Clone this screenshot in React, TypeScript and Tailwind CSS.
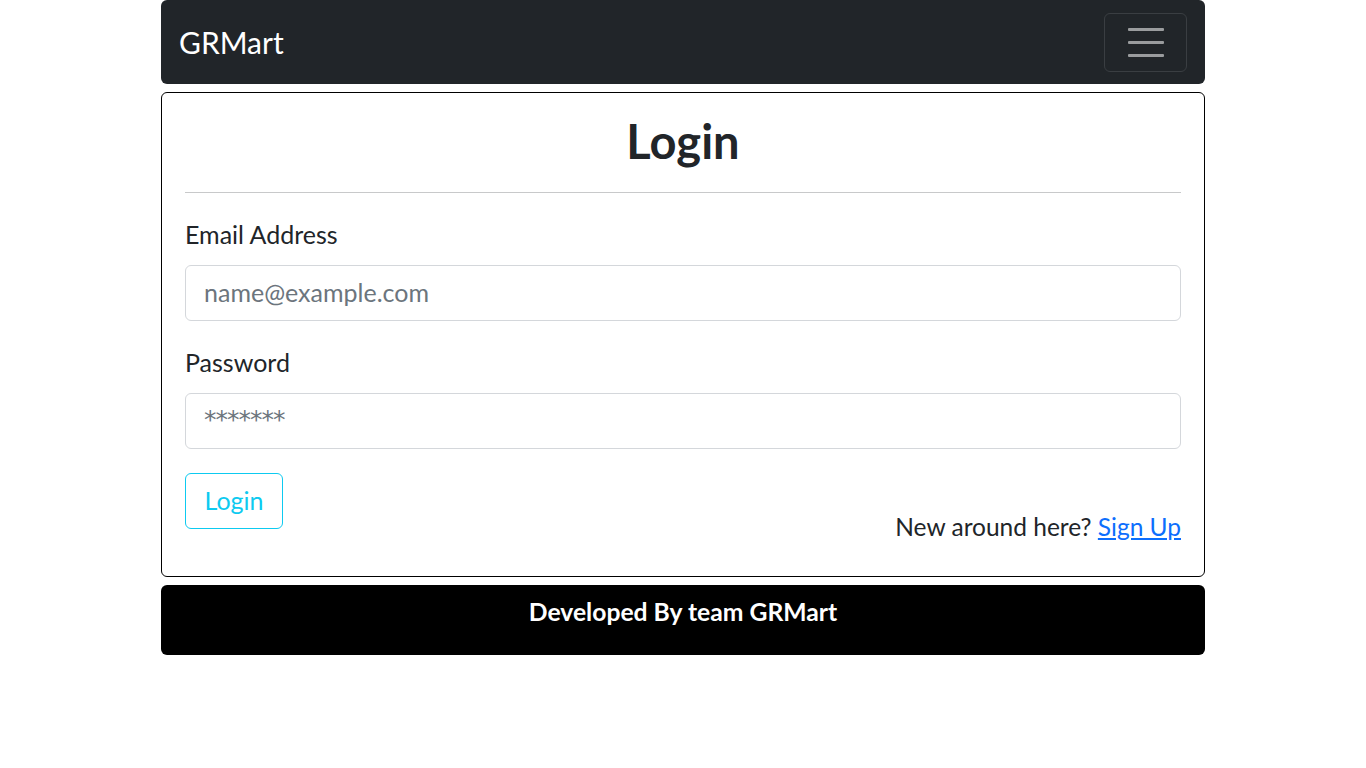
import React from "react";

export default function App() {
  return (
    <div
      className="w-full min-h-screen bg-white text-[#212529]"
      style={{ fontFamily: "Lato, 'Noto Sans', sans-serif" }}
    >
      <div className="mx-auto w-[1044px] flex flex-col">
        {/* Navbar */}
        <nav className="h-[84px] bg-[#212529] rounded-[6px] flex items-center justify-between pl-[18px] pr-[18px]">
          <span className="text-white text-[30px] leading-none">GRMart</span>
          <button className="w-[83px] h-[59px] border border-[#3a3e42] rounded-[6px] flex flex-col items-center justify-center gap-[10px]">
            <span className="block w-[36px] h-[3px] bg-[#9a9c9e] rounded-[1px]" />
            <span className="block w-[36px] h-[3px] bg-[#9a9c9e] rounded-[1px]" />
            <span className="block w-[36px] h-[3px] bg-[#9a9c9e] rounded-[1px]" />
          </button>
        </nav>

        {/* Card */}
        <div className="mt-[8px] border border-black rounded-[6px] px-[23px] pt-[24px] pb-[24px]">
          <h1 className="h-[48px] leading-[48px] text-center text-[47px] font-bold">Login</h1>
          <div className="mt-[27px] h-px bg-[#c8c9ca]" />

          <div className="mt-[26px] h-[30px] leading-[30px] text-[25px]">Email Address</div>
          <div className="mt-[16px] h-[56px] border border-[#d4d7db] rounded-[6px] flex items-center pl-[18px]">
            <span className="text-[25px] text-[#6c757d]">name@example.com</span>
          </div>

          <div className="mt-[26px] h-[30px] leading-[30px] text-[25px]">Password</div>
          <div className="mt-[16px] h-[56px] border border-[#d4d7db] rounded-[6px] flex items-center pl-[18px]">
            <span
              className="text-[25px] text-[#6c757d] -mt-[2px] tracking-[-1px]"
              style={{ fontFamily: "'DejaVu Sans', sans-serif" }}
            >
              *******
            </span>
          </div>

          <div className="mt-[24px] flex justify-between items-start h-[79px]">
            <button className="w-[98px] h-[56px] border border-[#0dcaf0] rounded-[6px] text-[#0dcaf0] text-[25px]">
              Login
            </button>
            <div className="mt-[39px] h-[30px] leading-[30px] text-[24.5px]">
              New around here?{" "}
              <a href="#" className="text-[#0d6efd] underline">
                Sign Up
              </a>
            </div>
          </div>
        </div>

        {/* Footer */}
        <footer className="mt-[8px] h-[70px] bg-black rounded-[6px] flex justify-center pt-[12px]">
          <span className="text-white text-[24.7px] font-bold leading-[30px]">Developed By team GRMart</span>
        </footer>
      </div>
    </div>
  );
}
